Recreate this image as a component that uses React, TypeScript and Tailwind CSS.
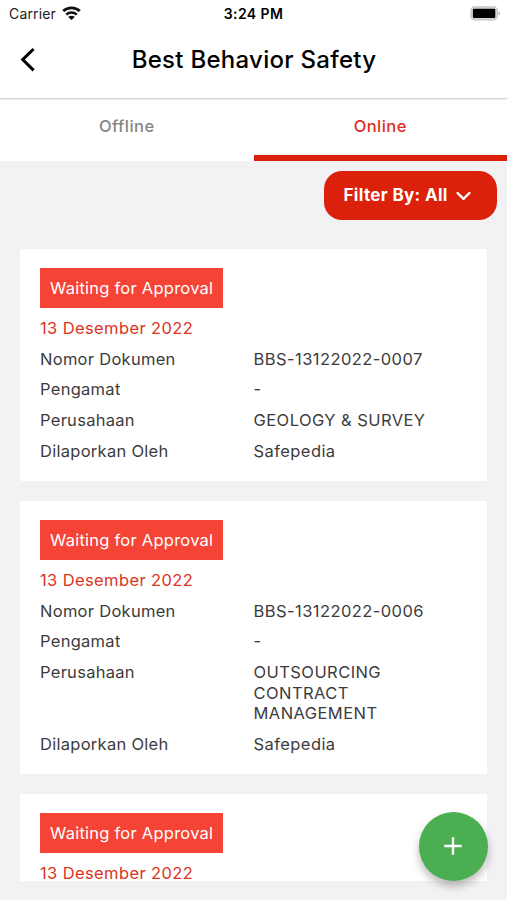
import React from "react";

interface RowProps {
	label: string;
	value: string;
}

interface ReportProps {
	status: string;
	date: string;
	rows: RowProps[];
}

interface TabProps {
	title: string;
	active?: boolean;
}

const reports: ReportProps[] = [
	{
		status: "Waiting for Approval",
		date: "13 Desember 2022",
		rows: [
			{ label: "Nomor Dokumen", value: "BBS-13122022-0007" },
			{ label: "Pengamat", value: "-" },
			{ label: "Perusahaan", value: "GEOLOGY & SURVEY" },
			{ label: "Dilaporkan Oleh", value: "Safepedia" },
		],
	},
	{
		status: "Waiting for Approval",
		date: "13 Desember 2022",
		rows: [
			{ label: "Nomor Dokumen", value: "BBS-13122022-0006" },
			{ label: "Pengamat", value: "-" },
			{ label: "Perusahaan", value: "OUTSOURCING CONTRACT MANAGEMENT" },
			{ label: "Dilaporkan Oleh", value: "Safepedia" },
		],
	},
	{
		status: "Waiting for Approval",
		date: "13 Desember 2022",
		rows: [],
	},
];

const StatusBar = () => {
	return (
		<div className="grid grid-cols-3 items-center h-[27px] pl-[9px] pr-[6px] text-[14px] leading-none text-[#222]">
			<div className="flex items-center gap-[6px]">
				<span className="tracking-[0.15px]">Carrier</span>
				<svg
					className="-mt-[2px]"
					width="19"
					height="14"
					viewBox="0 0 19 14"
					fill="none"
				>
					<path
						d="M1.2 5.1C5.8.7 13.2.7 17.8 5.1"
						stroke="#111"
						strokeWidth="2.8"
					/>
					<path
						d="M4.2 8.6c3-2.8 7.6-2.8 10.6 0"
						stroke="#111"
						strokeWidth="2.5"
					/>
					<path
						d="M9.5 14 6.2 10.9c1.9-1.6 4.7-1.6 6.6 0z"
						fill="#111"
					/>
				</svg>
			</div>
			<span className="-ml-[3px] text-center font-semibold tracking-[0.4px] text-black">
				3:24 PM
			</span>
			<svg
				className="justify-self-end -mt-px"
				width="31"
				height="15"
				viewBox="0 0 31 15"
			>
				<rect
					x="0.9"
					y="0.9"
					width="26.4"
					height="13"
					rx="3.8"
					fill="#d8d8d8"
					stroke="#c4c4c4"
					strokeWidth="1.2"
				/>
				<rect x="2.9" y="2.8" width="22.4" height="9.2" rx="1" fill="#000" />
				<path d="M28.6 5.2c1.9.8 1.9 3.6 0 4.4z" fill="#a8a8a8" />
			</svg>
		</div>
	);
};

const Header = () => {
	return (
		<div className="relative z-10 flex items-center h-[72px] pb-[6px] px-[20px] bg-white border-b border-[#d4d4d4] shadow-[0_1px_1px_rgba(0,0,0,0.06)]">
			<svg width="16" height="26" viewBox="0 0 16 26" fill="none">
				<path d="M13.6 2 2.7 12.6l10.9 10.8" stroke="#000" strokeWidth="3" />
			</svg>
			<h1 className="flex-1 pr-[15px] text-center text-[24px] leading-none font-medium tracking-[0.28px] text-black">
				Best Behavior Safety
			</h1>
		</div>
	);
};

const Tab = ({ title, active }: TabProps) => {
	return (
		<button
			className={
				active
					? "flex-1 h-full pb-[2px] border-b-[6px] border-[#db200b] font-medium text-[#db2f1f]"
					: "flex-1 h-full pb-[2px] border-b-[6px] border-transparent font-medium text-[#858585]"
			}
		>
			{title}
		</button>
	);
};

const Row = ({ label, value }: RowProps) => {
	return (
		<div className="grid grid-cols-2">
			<span>{label}</span>
			<span className="pr-[20px] tracking-[0.43px]">{value}</span>
		</div>
	);
};

const ReportCard = (props: ReportProps) => {
	return (
		<div className="flex flex-col shrink-0 gap-[10px] px-[20px] pt-[19.2px] pb-[19.8px] rounded-[2px] bg-white text-[16.5px] leading-[20.6px] tracking-[0.28px] text-[#3c3c3c]">
			<div className="flex items-center self-start h-[40px] w-[183px] pl-[10px] bg-[#f54336] tracking-[0.24px] text-white">
				{props.status}
			</div>
			<p className="tracking-[0.38px] text-[#dc3423]">{props.date}</p>
			{props.rows.map((row) => (
				<Row key={row.label} label={row.label} value={row.value} />
			))}
		</div>
	);
};

const App = () => {
	return (
		<div className="relative flex flex-col w-[507px] h-[900px] overflow-hidden bg-[#f2f2f4] font-['Inter',sans-serif]">
			<div className="bg-white">
				<StatusBar />
				<Header />
				<div className="flex h-[62px] text-[16.5px] tracking-[0.45px]">
					<Tab title="Offline" />
					<Tab title="Online" active />
				</div>
			</div>
			<div className="flex justify-end h-[88px] pt-[9.5px] pr-[10px]">
				<button className="flex items-center h-[49px] w-[173.5px] pt-px pl-[20px] gap-[8px] rounded-[18px] bg-[#db200b] text-[17px] font-bold tracking-[0.33px] text-white">
					Filter By: All
					<svg width="15" height="10" viewBox="0 0 15 10" fill="none">
						<path
							d="M1.6 2 7.5 7.8 13.4 2"
							stroke="#fff"
							strokeWidth="2.4"
							strokeLinecap="round"
							strokeLinejoin="round"
						/>
					</svg>
				</button>
			</div>
			<div className="flex flex-col gap-[20px] h-[632px] px-[20px] overflow-hidden">
				{reports.map((report, index) => (
					<ReportCard key={index} {...report} />
				))}
			</div>
			<button className="absolute right-[19.5px] bottom-[19.5px] flex items-center justify-center size-[68.5px] rounded-full bg-[#4bae50] shadow-[0_5px_9px_rgba(0,0,0,0.28)]">
				<svg width="18" height="18" viewBox="0 0 18 18">
					<path d="M9 0.3v17.4M0.3 9h17.4" stroke="#fff" strokeWidth="2.4" />
				</svg>
			</button>
		</div>
	);
};

export default App;
